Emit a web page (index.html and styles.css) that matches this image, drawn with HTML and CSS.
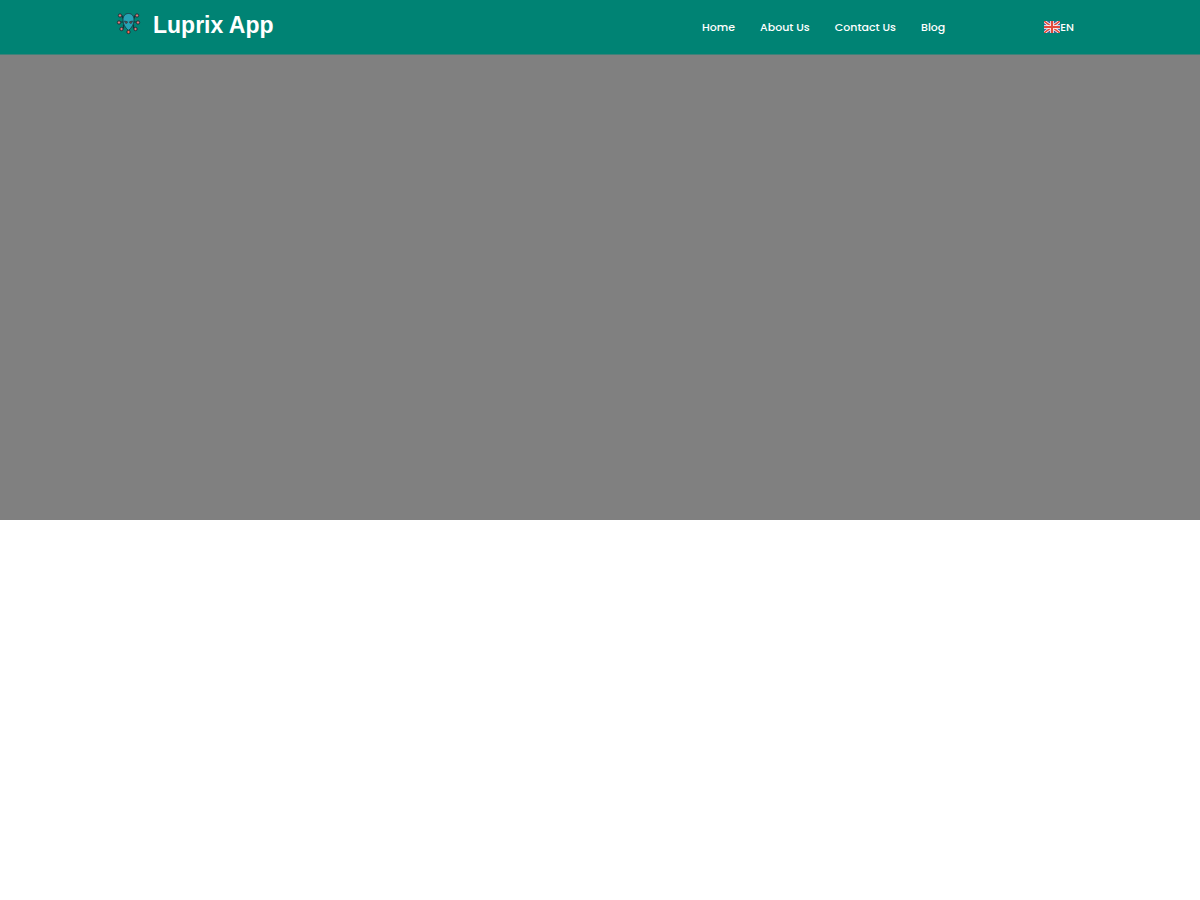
FILE: index.html
```html
<!DOCTYPE html>
<html lang="en">
<head>
    <meta charset="UTF-8">
    <meta name="viewport" content="width=device-width, initial-scale=1.0">
    <title>Luprix App</title>
    <link rel="stylesheet" href="styles.css">
</head>
<body>
    <header class="header">
        <a class="brand" href="#">
            <svg class="logo" viewBox="0 0 24 24" aria-hidden="true">
                <g fill="none" stroke="#17363b" stroke-width="1.2">
                    <path d="M8 6H6V4H4M16 6h2V4h2M8 10H3M16 10h5M9 13H7v3H5M15 13h2v3h2M12 17v3"/>
                </g>
                <path d="M12 1.500C8.500 1.500 6.500 4 6.500 8c0 4 2 7.500 5.500 10.500C15.500 15.500 17.500 12 17.500 8c0-4-2-6.500-5.500-6.500z" fill="#27a3b5" stroke="#17363b" stroke-width=".8"/>
                <g fill="#e4787a" stroke="#17363b">
                    <circle cx="3.500" cy="3.500" r="1.700"/>
                    <circle cx="20.500" cy="3.500" r="1.700"/>
                    <circle cx="2.500" cy="10.500" r="1.700"/>
                    <circle cx="21.500" cy="10.500" r="1.700"/>
                    <circle cx="5" cy="17" r="1.700"/>
                    <circle cx="19" cy="17" r="1.700"/>
                    <circle cx="12" cy="20" r="1.700" fill="#ff6950"/>
                </g>
                <path d="M8 9l3 .8-.5 1.400H9zM16 9l-3 .8.5 1.400H15z" fill="#8b4b51" stroke="#17363b" stroke-width=".7"/>
            </svg>
            <span class="brand-name">Luprix App</span>
        </a>
        <nav class="nav">
            <a href="#">Home</a>
            <a href="#">About Us</a>
            <a href="#">Contact Us</a>
            <a href="#">Blog</a>
        </nav>
        <button class="language" type="button">
            <svg class="flag" viewBox="0 0 16 12" aria-hidden="true">
                <path fill="#41639b" d="M0 0h16v12H0z"/>
                <path d="M0 0l16 12M16 0L0 12" stroke="#fff" stroke-width="3"/>
                <path d="M0 0l16 12M16 0L0 12" stroke="#e14b3b" stroke-width="1.600"/>
                <path d="M8 0v12M0 6h16" stroke="#fff" stroke-width="3.600"/>
                <path d="M8 0v12M0 6h16" stroke="#e14b3b" stroke-width="2.200"/>
            </svg>
            <span>EN</span>
        </button>
    </header>
    <main class="hero"></main>
</body>
</html>
```
FILE: styles.css
```css
body {
    margin: 0;
    background: #fff;
    font-family: Poppins, Inter, sans-serif;
}
.header {
    display: flex;
    align-items: center;
    min-height: 54px;
    padding: 0 126px 0 116px;
    background-color: #008374;
    border-bottom: 1px solid #3f8179;
}
a {
    color: white;
    text-decoration: none;
}
.brand {
    display: flex;
    align-items: center;
    gap: 12px;
    padding-bottom: 4px;
    margin-right: auto;
}
.logo {
    width: 25px;
    height: 24px;
    margin-bottom: 2px;
}
.brand-name {
    font-family: "Liberation Sans", Arial, sans-serif;
    font-size: 23px;
    line-height: 28px;
    font-weight: 700;
}
.nav {
    display: flex;
    gap: 25px;
    margin-right: 99px;
    font-size: 11px;
    line-height: 16px;
    font-weight: 500;
}
.language {
    display: flex;
    align-items: center;
    padding: 0;
    border: none;
    background: none;
    color: white;
    font-family: inherit;
    font-size: 11px;
    line-height: 16px;
    font-weight: 500;
    cursor: pointer;
}
.flag {
    width: 16px;
    height: 12px;
}
.hero {
    min-height: 465px;
    background-color: #808080;
}
```
